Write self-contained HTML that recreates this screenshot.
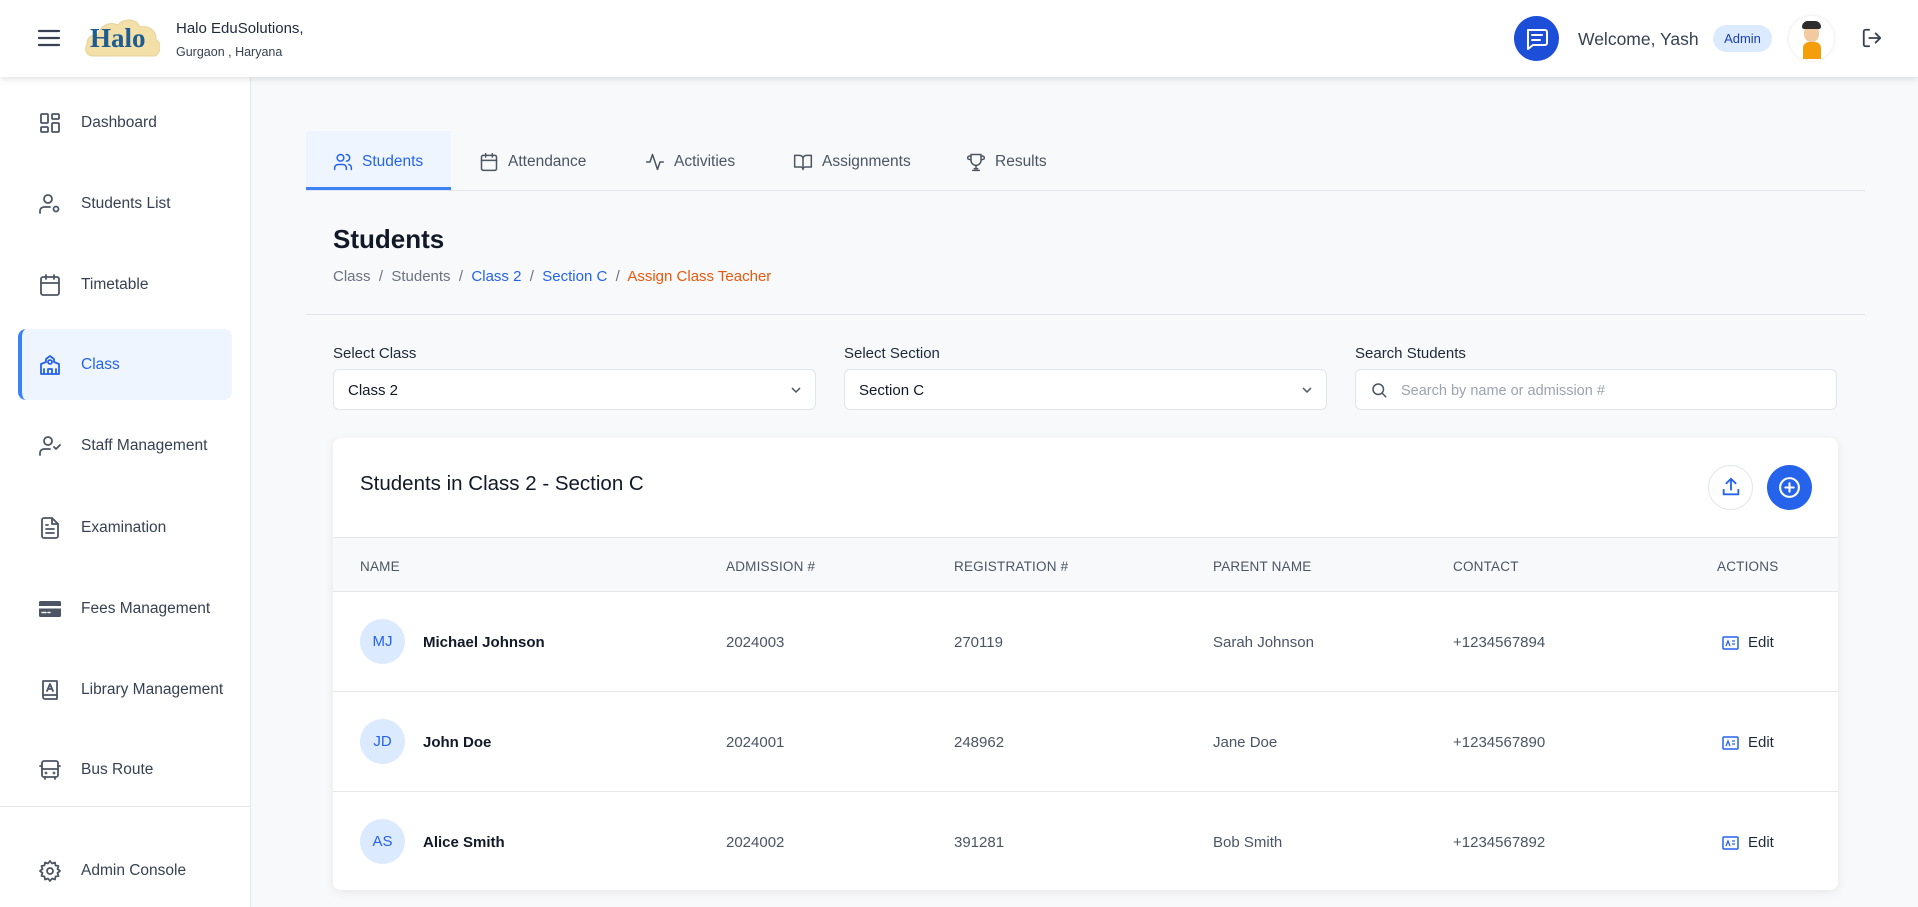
<!DOCTYPE html>
<html><head><meta charset="utf-8"><style>
*{box-sizing:border-box;margin:0;padding:0}
body{width:1918px;height:907px;overflow:hidden;font-family:"Liberation Sans",sans-serif;background:#f8f9fb;position:relative;color:#111827}
.abs{position:absolute}
header{position:absolute;left:0;top:0;width:1918px;height:77px;background:#fff;box-shadow:0 2px 6px rgba(0,0,0,.12);z-index:5}
aside{position:absolute;left:0;top:77px;width:251px;height:830px;background:#fff;border-right:1px solid #e5e7eb}
.nav{position:absolute;left:0;width:251px;height:40px;display:flex;align-items:center;font-size:15.5px;color:#374151}
.nav svg{position:absolute;left:38px;width:24px;height:24px;fill:none;stroke:#4b5563;stroke-width:1.8;stroke-linecap:round;stroke-linejoin:round}
.nav span{position:absolute;left:81px}
.tab{position:absolute;top:132px;height:59px;display:flex;align-items:center;font-size:15.5px;color:#4b5563}
.tab svg{width:20px;height:20px;fill:none;stroke:#4b5563;stroke-width:1.8;stroke-linecap:round;stroke-linejoin:round;margin-right:9px}
.lbl{position:absolute;top:345px;font-size:15px;color:#1f2937}
.inp{position:absolute;top:369px;height:41px;background:#fff;border:1px solid #e2e5ea;border-radius:6px;font-size:15px;display:flex;align-items:center;padding-left:14px;padding-top:2px;color:#111827}
.th{position:absolute;top:559px;font-size:13.5px;color:#4b5563;letter-spacing:.2px}
.td{position:absolute;font-size:15px;color:#4b5563}
.av{position:absolute;left:360px;width:45px;height:45px;border-radius:50%;background:#dbeafe;color:#2563eb;font-size:15px;display:flex;align-items:center;justify-content:center}
.nm{position:absolute;left:423px;font-size:15px;font-weight:bold;color:#111827}
.ed{position:absolute;left:1722px;display:flex;align-items:center;font-size:15px;color:#1f2937}
.ed svg{width:17px;height:14px;margin-right:9px}
</style></head><body>
<header>
<svg class="abs" style="left:37px;top:27px" width="24" height="22" viewBox="0 0 24 22"><path d="M2 4h20M2 11h20M2 18h20" stroke="#374151" stroke-width="2.2" stroke-linecap="round"/></svg>
<div class="abs" style="left:84px;top:12px;width:76px;height:50px">
<svg width="76" height="50" viewBox="0 0 76 50"><path d="M9 44c-7 0-9-7-6-12 0-7 5-10 11-9 2-9 11-14 20-10 5-7 18-7 22 2 9-2 17 4 16 13 6 3 5 13-1 16z" fill="#f3dfa8" stroke="#e8d29a"/></svg>
<div class="abs" style="left:6px;top:11px;font-family:'Liberation Serif',serif;font-weight:bold;font-size:27px;color:#1f5c8f">Halo</div></div>
<div class="abs" style="left:176px;top:20px;font-size:15px;color:#1f2937">Halo EduSolutions,</div>
<div class="abs" style="left:176px;top:45px;font-size:12.5px;color:#374151">Gurgaon , Haryana</div>
<div class="abs" style="left:1514px;top:16px;width:45px;height:45px;border-radius:50%;background:#1d4ed8"><svg width="45" height="45" viewBox="0 0 45 45"><path d="M14 14h17a2 2 0 0 1 2 2v11a2 2 0 0 1-2 2H19l-5 4z" fill="none" stroke="#fff" stroke-width="2" stroke-linejoin="round"/><path d="M18 19h10M18 24h8" stroke="#fff" stroke-width="2" stroke-linecap="round"/></svg></div>
<div class="abs" style="left:1578px;top:29px;font-size:17.5px;color:#374151">Welcome, Yash</div>
<div class="abs" style="left:1713px;top:25px;width:59px;height:27px;border-radius:14px;background:#dbeafe;color:#1e40af;font-size:13px;display:flex;align-items:center;justify-content:center">Admin</div>
<div class="abs" style="left:1789px;top:16px;width:45px;height:45px;border-radius:50%;background:#fff;box-shadow:0 0 4px rgba(0,0,0,.1);overflow:hidden">
<div class="abs" style="left:14px;top:26px;width:18px;height:17px;background:#f59e0b;border-radius:6px 6px 0 0"></div>
<div class="abs" style="left:15px;top:9px;width:15px;height:17px;background:#f3c9a0;border-radius:45%"></div>
<div class="abs" style="left:13px;top:5px;width:19px;height:8px;background:#2d2d2d;border-radius:8px 8px 3px 3px"></div></div>
<svg class="abs" style="left:1861px;top:27px" width="22" height="22" viewBox="0 0 24 24" fill="none" stroke="#374151" stroke-width="2" stroke-linecap="round" stroke-linejoin="round"><path d="M9 21H5a2 2 0 0 1-2-2V5a2 2 0 0 1 2-2h4M16 17l5-5-5-5M21 12H9"/></svg>
</header>

<aside>
<div class="nav" style="top:26px"><svg viewBox="0 0 24 24"><rect x="3" y="3" width="7" height="9" rx="1"/><rect x="14" y="3" width="7" height="5" rx="1"/><rect x="14" y="12" width="7" height="9" rx="1"/><rect x="3" y="16" width="7" height="5" rx="1"/></svg><span>Dashboard</span></div>
<div class="nav" style="top:107px"><svg viewBox="0 0 24 24"><circle cx="10" cy="7" r="4"/><path d="M2 21v-2a4 4 0 0 1 4-4h6"/><circle cx="18" cy="17" r="2.5"/></svg><span>Students List</span></div>
<div class="nav" style="top:188px"><svg viewBox="0 0 24 24"><rect x="3" y="4" width="18" height="18" rx="2"/><path d="M16 2v4M8 2v4M3 10h18"/></svg><span>Timetable</span></div>
<div class="abs" style="left:18px;top:252px;width:214px;height:71px;background:#eef5ff;border-radius:8px;border-left:4px solid #3b82f6"></div>
<div class="nav" style="top:268px;color:#2563eb"><svg viewBox="0 0 24 24" style="stroke:#2563eb"><path d="M3 21V11l5-2V6l4-3 4 3v3l5 2v10z"/><circle cx="12" cy="9" r="2"/><path d="M10 21v-5h4v5M6 21v-5M18 21v-5"/></svg><span>Class</span></div>
<div class="nav" style="top:349px"><svg viewBox="0 0 24 24"><circle cx="10" cy="7" r="4"/><path d="M2 21v-2a4 4 0 0 1 4-4h6M16 13l2 2 4-4"/></svg><span>Staff Management</span></div>
<div class="nav" style="top:431px"><svg viewBox="0 0 24 24"><path d="M14 2H6a2 2 0 0 0-2 2v16a2 2 0 0 0 2 2h12a2 2 0 0 0 2-2V8z"/><path d="M14 2v6h6M8 13h8M8 17h8M8 9h2"/></svg><span>Examination</span></div>
<div class="nav" style="top:512px"><svg viewBox="0 0 24 24" style="stroke:none;fill:#4b5563"><rect x="1" y="4" width="22" height="16" rx="1.5"/><rect x="1" y="9" width="22" height="2.5" fill="#fff"/><path d="M4 15.5h4M10 15.5h2" stroke="#fff" stroke-width="1.5"/></svg><span>Fees Management</span></div>
<div class="nav" style="top:593px"><svg viewBox="0 0 24 24"><path d="M5 3h14v18H7a2 2 0 0 1-2-2z"/><path d="M5 17h14M9 13l3-7 3 7M10 11h4"/></svg><span>Library Management</span></div>
<div class="nav" style="top:673px"><svg viewBox="0 0 24 24"><rect x="4" y="3" width="16" height="16" rx="2"/><path d="M4 11h16M7 19v2M17 19v2M2 8h2M20 8h2"/><circle cx="8" cy="15" r=".5"/><circle cx="16" cy="15" r=".5"/></svg><span>Bus Route</span></div>
<div class="abs" style="left:0;top:729px;width:251px;height:1px;background:#e5e7eb"></div>
<div class="nav" style="top:774px"><svg viewBox="0 0 24 24"><circle cx="12" cy="12" r="3"/><path d="M12 2l2 2.5 3-1 .5 3 3 .5-1 3L22 12l-2.5 2 1 3-3 .5-.5 3-3-1L12 22l-2-2.5-3 1-.5-3-3-.5 1-3L2 12l2.5-2-1-3 3-.5.5-3 3 1z"/></svg><span>Admin Console</span></div>
</aside>

<div class="abs" style="left:306px;top:131px;width:145px;height:59px;background:#eef5ff;border-bottom:3px solid #3b82f6"></div>
<div class="abs" style="left:306px;top:190px;width:1559px;height:1px;background:#e2e5ea"></div>
<div class="tab" style="left:333px;color:#2563eb"><svg viewBox="0 0 24 24" style="stroke:#2563eb"><circle cx="9" cy="7" r="4"/><path d="M2 21v-2a4 4 0 0 1 4-4h6a4 4 0 0 1 4 4v2M16 3a4 4 0 0 1 0 8M22 21v-2a4 4 0 0 0-3-4"/></svg>Students</div>
<div class="tab" style="left:479px"><svg viewBox="0 0 24 24"><rect x="3" y="4" width="18" height="18" rx="2"/><path d="M16 2v4M8 2v4M3 10h18"/></svg>Attendance</div>
<div class="tab" style="left:645px"><svg viewBox="0 0 24 24"><path d="M22 12h-4l-3 9L9 3l-3 9H2"/></svg>Activities</div>
<div class="tab" style="left:793px"><svg viewBox="0 0 24 24"><path d="M2 4h6a4 4 0 0 1 4 4v13a3 3 0 0 0-3-3H2zM22 4h-6a4 4 0 0 0-4 4v13a3 3 0 0 1 3-3h7z"/></svg>Assignments</div>
<div class="tab" style="left:966px"><svg viewBox="0 0 24 24"><path d="M6 9H4a2 2 0 0 1 0-4h2M18 9h2a2 2 0 0 0 0-4h-2M6 3h12v7a6 6 0 0 1-12 0zM12 16v4M8 22h8M10 20h4"/></svg>Results</div>

<div class="abs" style="left:333px;top:224px;font-size:26px;font-weight:bold;color:#111827">Students</div>
<div class="abs" style="left:333px;top:268px;font-size:15px;color:#6b7280;word-spacing:0px">Class &nbsp;/&nbsp; Students &nbsp;/&nbsp; <span style="color:#2563eb">Class 2</span> &nbsp;/&nbsp; <span style="color:#2563eb">Section C</span> &nbsp;/&nbsp; <span style="color:#ea580c">Assign Class Teacher</span></div>
<div class="abs" style="left:306px;top:314px;width:1559px;height:1px;background:#e2e5ea"></div>

<div class="lbl" style="left:333px">Select Class</div>
<div class="lbl" style="left:844px">Select Section</div>
<div class="lbl" style="left:1355px">Search Students</div>
<div class="inp" style="left:333px;width:483px">Class 2<svg class="abs" style="right:14px;top:16px" width="10" height="8" viewBox="0 0 10 8"><path d="M1 2l4 4 4-4" fill="none" stroke="#4b5563" stroke-width="1.5"/></svg></div>
<div class="inp" style="left:844px;width:483px">Section C<svg class="abs" style="right:14px;top:16px" width="10" height="8" viewBox="0 0 10 8"><path d="M1 2l4 4 4-4" fill="none" stroke="#4b5563" stroke-width="1.5"/></svg></div>
<div class="inp" style="left:1355px;width:482px;padding-left:45px;color:#9ca3af;font-size:14.5px"><svg class="abs" style="left:14px;top:11px" width="18" height="18" viewBox="0 0 24 24" fill="none" stroke="#4b5563" stroke-width="2" stroke-linecap="round"><circle cx="11" cy="11" r="7"/><path d="M21 21l-4.5-4.5"/></svg>Search by name or admission #</div>

<div class="abs" style="left:333px;top:438px;width:1505px;height:452px;background:#fff;border-radius:8px;box-shadow:0 2px 10px rgba(0,0,0,.08);overflow:hidden">
<div class="abs" style="left:27px;top:34px;font-size:20.5px;color:#111827">Students in Class 2 - Section C</div>
<div class="abs" style="left:1375px;top:27px;width:45px;height:45px;border-radius:50%;border:1px solid #e2e5ea;background:#fff"><svg class="abs" style="left:11px;top:10px" width="22" height="22" viewBox="0 0 24 24" fill="none" stroke="#2563eb" stroke-width="2" stroke-linecap="round" stroke-linejoin="round"><path d="M12 15V3M7 8l5-5 5 5M4 15v5h16v-5"/></svg></div>
<div class="abs" style="left:1434px;top:27px;width:45px;height:45px;border-radius:50%;background:#2563eb"><svg class="abs" style="left:10px;top:10px" width="25" height="25" viewBox="0 0 24 24" fill="none" stroke="#fff" stroke-width="2" stroke-linecap="round"><circle cx="12" cy="12" r="9"/><path d="M12 8v8M8 12h8"/></svg></div>
<div class="abs" style="left:0;top:99px;width:1505px;height:55px;background:#f8f9fb;border-top:1px solid #e5e7eb;border-bottom:1px solid #e5e7eb"></div>
<div class="abs" style="left:0;top:253px;width:1505px;height:1px;background:#e5e7eb"></div>
<div class="abs" style="left:0;top:353px;width:1505px;height:1px;background:#e5e7eb"></div>
</div>
<div class="th" style="left:360px">NAME</div>
<div class="th" style="left:726px">ADMISSION #</div>
<div class="th" style="left:954px">REGISTRATION #</div>
<div class="th" style="left:1213px">PARENT NAME</div>
<div class="th" style="left:1453px">CONTACT</div>
<div class="th" style="left:1717px">ACTIONS</div>

<div class="av" style="top:619px">MJ</div><div class="nm" style="top:634px">Michael Johnson</div>
<div class="td" style="left:726px;top:634px">2024003</div><div class="td" style="left:954px;top:634px">270119</div><div class="td" style="left:1213px;top:634px">Sarah Johnson</div><div class="td" style="left:1453px;top:634px">+1234567894</div>
<div class="ed" style="top:634px"><svg viewBox="0 0 17 14"><rect x="1" y="1" width="15" height="12" rx="1" fill="none" stroke="#2563eb" stroke-width="1.5"/><path d="M4 10l2-5 2 5M10 5h3M10 8h3" stroke="#2563eb" stroke-width="1.3" fill="none"/></svg>Edit</div>

<div class="av" style="top:719px">JD</div><div class="nm" style="top:734px">John Doe</div>
<div class="td" style="left:726px;top:734px">2024001</div><div class="td" style="left:954px;top:734px">248962</div><div class="td" style="left:1213px;top:734px">Jane Doe</div><div class="td" style="left:1453px;top:734px">+1234567890</div>
<div class="ed" style="top:734px"><svg viewBox="0 0 17 14"><rect x="1" y="1" width="15" height="12" rx="1" fill="none" stroke="#2563eb" stroke-width="1.5"/><path d="M4 10l2-5 2 5M10 5h3M10 8h3" stroke="#2563eb" stroke-width="1.3" fill="none"/></svg>Edit</div>

<div class="av" style="top:819px">AS</div><div class="nm" style="top:834px">Alice Smith</div>
<div class="td" style="left:726px;top:834px">2024002</div><div class="td" style="left:954px;top:834px">391281</div><div class="td" style="left:1213px;top:834px">Bob Smith</div><div class="td" style="left:1453px;top:834px">+1234567892</div>
<div class="ed" style="top:834px"><svg viewBox="0 0 17 14"><rect x="1" y="1" width="15" height="12" rx="1" fill="none" stroke="#2563eb" stroke-width="1.5"/><path d="M4 10l2-5 2 5M10 5h3M10 8h3" stroke="#2563eb" stroke-width="1.3" fill="none"/></svg>Edit</div>
</body></html>
